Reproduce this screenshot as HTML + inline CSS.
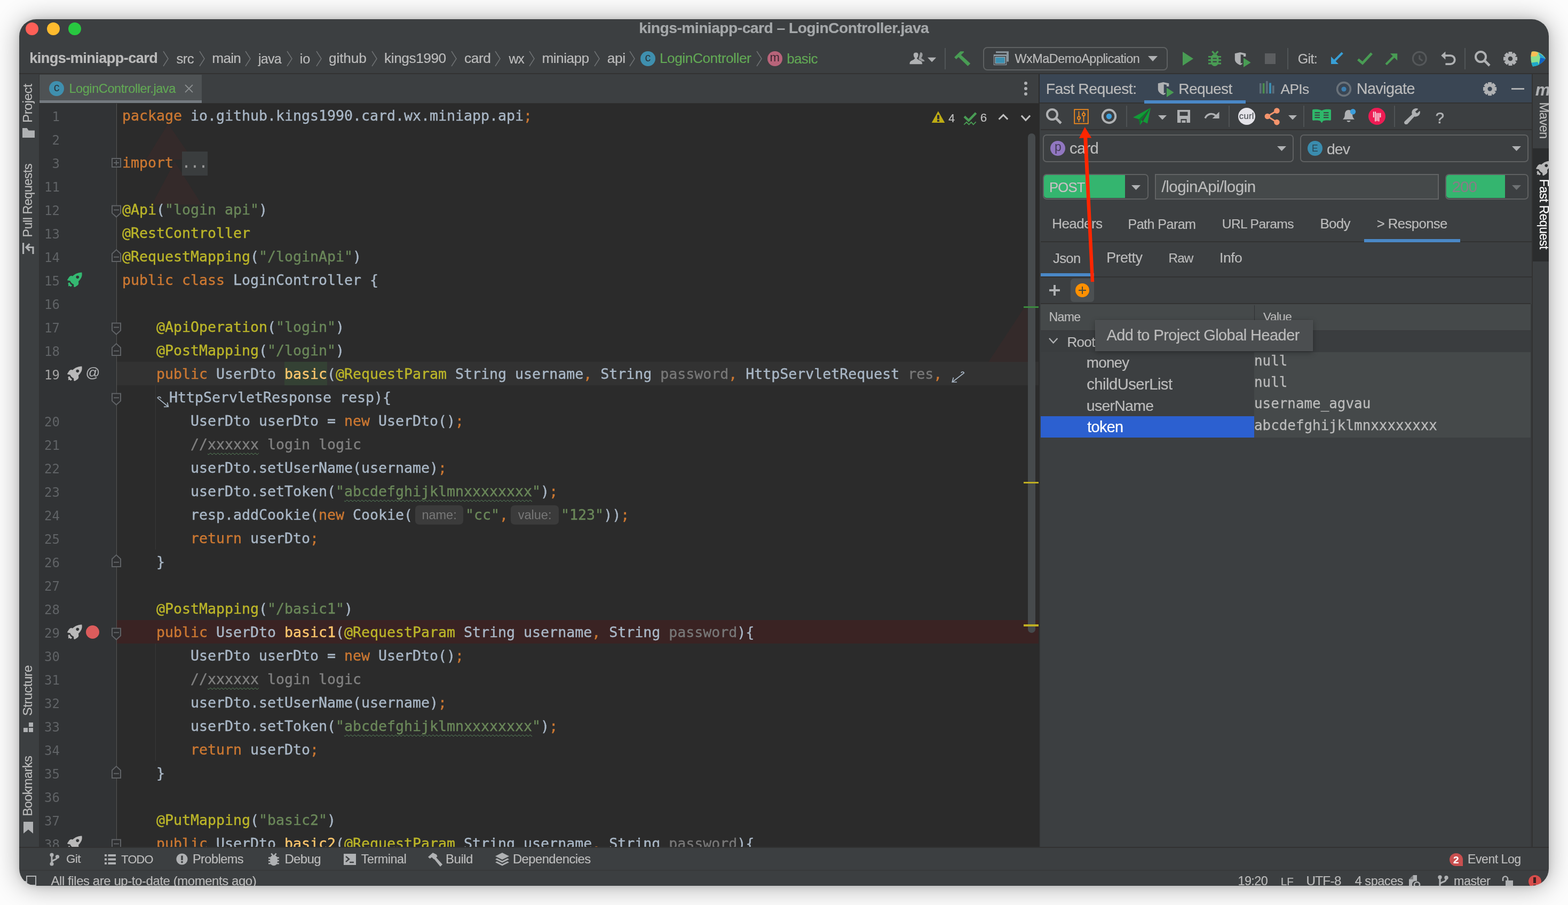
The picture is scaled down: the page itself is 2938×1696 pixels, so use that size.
<!DOCTYPE html>
<html lang="en"><head><meta charset="utf-8"><title>kings-miniapp-card – LoginController.java</title>
<style>

html,body{margin:0;padding:0;background:#fcfcfc;}
body{width:2938px;height:1696px;overflow:hidden;position:relative;font-family:"Liberation Sans",sans-serif;}
#shadow{position:absolute;left:36px;top:36px;width:2866px;height:1624px;border-radius:32px;
 box-shadow:0 2px 48px rgba(0,0,0,.33),0 0 14px rgba(0,0,0,.11);}
#win{position:absolute;left:0;top:0;width:2938px;height:1696px;background:#3c3f41;
 clip-path:inset(36px 36px 36px 36px round 32px);overflow:hidden;will-change:transform;}
#win div,#win svg,#win span{position:absolute;}
.t{white-space:pre;line-height:40px;height:40px;color:#bbbbbb;-webkit-text-stroke:0.2px;}
.c{white-space:pre;font-family:"DejaVu Sans Mono","Liberation Mono",monospace;font-size:26.58px;line-height:44px;height:44px;color:#a9b7c6;left:229px;-webkit-text-stroke:0.4px;}
.c i{font-style:normal}
.k{color:#cc7832}.a{color:#bbb529}.s{color:#6a8759}.m{color:#ffc66d}.g{color:#808080}.u{color:#787878}
.w{text-decoration:underline wavy #5b8a5e 1px;text-underline-offset:5.5px;}
.ln{white-space:pre;font-family:"DejaVu Sans Mono","Liberation Mono",monospace;font-size:24px;line-height:44px;height:44px;color:#606366;width:76px;left:36px;text-align:right;}
.v{font-family:"DejaVu Sans Mono","Liberation Mono",monospace;font-size:25.9px;color:#bbbbbb;white-space:pre;line-height:40px;height:40px;left:2350px;-webkit-text-stroke:0.3px;}
.hint{-webkit-text-stroke:0;display:inline-block;position:static !important;font-family:"Liberation Sans",sans-serif;font-size:23.5px;color:#787878;background:#3b3b3b;border-radius:7px;height:36px;line-height:36px;vertical-align:top;margin-top:4px;text-align:center;}

</style></head>
<body>
<div id="shadow"></div>
<div id="win">
<div style="left:36px;top:36px;width:2866px;height:46px;background:#3c3f41;"></div>
<div style="left:48px;top:41.8px;width:24.2px;height:24.2px;border-radius:50%;background:#fe5f57"></div>
<div style="left:87.8px;top:41.8px;width:24.2px;height:24.2px;border-radius:50%;background:#febb2e"></div>
<div style="left:128px;top:41.8px;width:24.2px;height:24.2px;border-radius:50%;background:#28c840"></div>
<span class="t" style="left:1197.3px;top:31.8px;font-size:28.25px;letter-spacing:-0.54px;color:#a5a8aa;font-weight:700;">kings-miniapp-card – LoginController.java</span>
<div style="left:36px;top:137px;width:2866px;height:2px;background:#323232;"></div>
<span class="t" style="left:55.2px;top:89.1px;font-size:27.12px;letter-spacing:-0.56px;font-weight:700;">kings-miniapp-card</span>
<span class="t" style="left:330.6px;top:89.6px;font-size:25.66px;letter-spacing:-0.64px;">src</span>
<span class="t" style="left:397.3px;top:89.4px;font-size:26.16px;letter-spacing:-0.69px;">main</span>
<span class="t" style="left:484.0px;top:89.9px;font-size:24.96px;letter-spacing:-0.68px;">java</span>
<span class="t" style="left:561.7px;top:89.7px;font-size:25.36px;">io</span>
<span class="t" style="left:616.1px;top:89.4px;font-size:26.24px;letter-spacing:-0.16px;">github</span>
<span class="t" style="left:720.1px;top:89.4px;font-size:26.24px;letter-spacing:-0.44px;">kings1990</span>
<span class="t" style="left:869.9px;top:89.4px;font-size:26.24px;letter-spacing:-0.34px;">card</span>
<span class="t" style="left:953.5px;top:89.9px;font-size:24.96px;letter-spacing:-1.31px;">wx</span>
<span class="t" style="left:1015.5px;top:89.4px;font-size:26.24px;letter-spacing:-0.54px;">miniapp</span>
<span class="t" style="left:1137.8px;top:89.4px;font-size:26.24px;letter-spacing:-0.32px;">api</span>
<svg style="left:303.6px;top:95px;" width="14" height="30" viewBox="0 0 14 30"><path d="M2 1 L11 15 L2 29" fill="none" stroke="#6e7173" stroke-width="1.6"/></svg>
<svg style="left:371.8px;top:95px;" width="14" height="30" viewBox="0 0 14 30"><path d="M2 1 L11 15 L2 29" fill="none" stroke="#6e7173" stroke-width="1.6"/></svg>
<svg style="left:458px;top:95px;" width="14" height="30" viewBox="0 0 14 30"><path d="M2 1 L11 15 L2 29" fill="none" stroke="#6e7173" stroke-width="1.6"/></svg>
<svg style="left:535.7px;top:95px;" width="14" height="30" viewBox="0 0 14 30"><path d="M2 1 L11 15 L2 29" fill="none" stroke="#6e7173" stroke-width="1.6"/></svg>
<svg style="left:590.5px;top:95px;" width="14" height="30" viewBox="0 0 14 30"><path d="M2 1 L11 15 L2 29" fill="none" stroke="#6e7173" stroke-width="1.6"/></svg>
<svg style="left:694.5px;top:95px;" width="14" height="30" viewBox="0 0 14 30"><path d="M2 1 L11 15 L2 29" fill="none" stroke="#6e7173" stroke-width="1.6"/></svg>
<svg style="left:843.7px;top:95px;" width="14" height="30" viewBox="0 0 14 30"><path d="M2 1 L11 15 L2 29" fill="none" stroke="#6e7173" stroke-width="1.6"/></svg>
<svg style="left:926px;top:95px;" width="14" height="30" viewBox="0 0 14 30"><path d="M2 1 L11 15 L2 29" fill="none" stroke="#6e7173" stroke-width="1.6"/></svg>
<svg style="left:990px;top:95px;" width="14" height="30" viewBox="0 0 14 30"><path d="M2 1 L11 15 L2 29" fill="none" stroke="#6e7173" stroke-width="1.6"/></svg>
<svg style="left:1111.6px;top:95px;" width="14" height="30" viewBox="0 0 14 30"><path d="M2 1 L11 15 L2 29" fill="none" stroke="#6e7173" stroke-width="1.6"/></svg>
<svg style="left:1177.6px;top:95px;" width="14" height="30" viewBox="0 0 14 30"><path d="M2 1 L11 15 L2 29" fill="none" stroke="#6e7173" stroke-width="1.6"/></svg>
<svg style="left:1416px;top:95px;" width="14" height="30" viewBox="0 0 14 30"><path d="M2 1 L11 15 L2 29" fill="none" stroke="#6e7173" stroke-width="1.6"/></svg>
<span class="t" style="left:1235.9px;top:89.4px;font-size:26.24px;letter-spacing:-0.43px;color:#62a855;">LoginController</span>
<span class="t" style="left:1474.2px;top:89.5px;font-size:25.88px;letter-spacing:-0.56px;color:#62a855;">basic</span>
<div style="left:1199.8px;top:96.3px;width:28px;height:28px;border-radius:50%;background:#3f8fae;"></div>
<span style="left:1199.8px;top:94px;width:28px;height:28px;line-height:28px;text-align:center;font-size:21.5px;color:#2b3238;font-weight:400">c</span>
<div style="left:1437.6px;top:96.3px;width:28px;height:28px;border-radius:50%;background:#b8647a;"></div>
<span style="left:1437.6px;top:94.3px;width:28px;height:28px;line-height:28px;text-align:center;font-size:22px;color:#3a2630;font-weight:400">m</span>
<svg style="left:1700px;top:94px" width="58" height="32" viewBox="1700 94 58 32"><g fill="#afb1b3"><path d="M1724.6 98 C1727.6 98 1728.8 100.4 1728.6 103 C1728.4 105.6 1727.3 107.3 1726.2 108.3 C1726.5 110.8 1732.2 111.2 1732.4 115 H1727 C1725.3 113.2 1721.5 112.6 1721.2 110.3 Z" opacity=".8"/><path d="M1716.2 98 C1720 98 1721.3 100.8 1721 103.6 C1720.7 106.4 1719.6 108 1718.5 109 C1718.7 112.3 1728 112.3 1728.4 118.5 V120.8 H1704 V118.5 C1704.4 112.3 1713.7 112.3 1713.9 109 C1712.8 108 1711.7 106.4 1711.4 103.6 C1711.1 100.8 1712.4 98 1716.2 98 Z" stroke="#3c3f41" stroke-width="1"/><path d="M1738 107.8 H1754.2 L1746.1 116.2 Z"/></g></svg>
<div style="left:1770px;top:90px;width:2px;height:40px;background:#515658;"></div>
<svg style="left:1786px;top:94px" width="36" height="32" viewBox="1786 94 36 32"><path d="M1788.1 107.2 L1799.4 96.3 L1806 96.3 L1806 98.1 L1800.7 102.9 L1818.2 119 L1813.4 123.8 L1796 107 L1791.6 111 Z" fill="#499c54"/></svg>
<div style="left:1842px;top:88px;width:346px;height:44px;box-sizing:border-box;border:2px solid #5e6162;border-radius:8px;"></div>
<svg style="left:1860px;top:95px" width="32" height="29" viewBox="1860 95 32 29"><path d="M1866 102.3 V96.2 H1890 V115.5 H1886.2 V99.2 H1866 Z" fill="#9aa7b0" opacity=".85"/><rect x="1861.8" y="102.3" width="24.4" height="19.7" fill="#9aa7b0"/><rect x="1865.7" y="107.8" width="16.6" height="10.3" fill="#3a8fb0"/><rect x="1863.6" y="105.6" width="20.8" height="14.6" fill="none" stroke="#3c3f41" stroke-width="1.6"/></svg>
<span class="t" style="left:1901.5px;top:90.4px;font-size:23.44px;letter-spacing:-0.52px;">WxMaDemoApplication</span>
<svg style="left:2151px;top:104px;" width="18" height="12" viewBox="0 0 18 12"><path d="M0 1 H18 L9 11 Z" fill="#afb1b3"/></svg>
<svg style="left:2215px;top:97px;" width="22" height="26" viewBox="0 0 22 26"><path d="M1 0 L21 13 L1 26 Z" fill="#499c54"/></svg>
<svg style="left:2262px;top:94px" width="28" height="32" viewBox="2262 94 28 32"><g fill="none" stroke="#499c54" stroke-width="3.2"><path d="M2271.3 96.2 L2276 101.3 M2282.2 96.2 L2277.5 101.3"/><path d="M2264 106.4 H2288 M2264 112.7 H2288 M2264 119 H2288" stroke-width="2.9"/></g><path d="M2268.9 109 A7.2 7.6 0 0 1 2283.3 109 V116.5 A7.2 7.4 0 0 1 2268.9 116.5 Z" fill="#499c54"/><path d="M2272.4 109.5 H2279.8 M2272.4 115.6 H2279.8" stroke="#3c3f41" stroke-width="2.2"/></svg>
<svg style="left:2312px;top:96px" width="34" height="32" viewBox="2312 96 34 32"><path d="M2313.8 100.3 L2323.8 98 L2334.3 100.3 V105.9 H2329.9 V102.9 L2324.7 102 V119 L2327.7 117.7 V120 L2323.8 122 C2318 119.5 2313.8 116 2313.8 111 Z" fill="#afb1b3"/><path d="M2330 108.5 L2343.6 117.2 L2330 126 Z" fill="#499c54"/></svg>
<div style="left:2370px;top:100px;width:20px;height:20px;background:#5c5e60;"></div>
<div style="left:2412px;top:90px;width:2px;height:40px;background:#515658;"></div>
<span class="t" style="left:2431.7px;top:89.9px;font-size:24.96px;letter-spacing:-0.60px;">Git:</span>
<svg style="left:2490px;top:94px" width="30" height="30" viewBox="2490 94 30 30"><path d="M2515.3 99.1 L2499 115.4" stroke="#389fd6" stroke-width="4.2" fill="none"/><path d="M2494 106 V120 H2508 Z" fill="#389fd6"/></svg>
<svg style="left:2540px;top:94px" width="34" height="30" viewBox="2540 94 34 30"><path d="M2544.6 111.2 L2553 118.4 L2570.2 99.8" fill="none" stroke="#499c54" stroke-width="4.8"/></svg>
<svg style="left:2592px;top:94px" width="30" height="30" viewBox="2592 94 30 30"><path d="M2597 120.8 L2613 104.8" stroke="#499c54" stroke-width="4.2" fill="none"/><path d="M2604.8 100.2 H2618.2 V113.6 Z" fill="#499c54"/></svg>
<svg style="left:2644px;top:94px" width="32" height="32" viewBox="2644 94 32 32"><circle cx="2659.8" cy="109.7" r="12.4" fill="none" stroke="#55585a" stroke-width="3.2"/><path d="M2659.8 103.5 V110 L2665.5 114" fill="none" stroke="#55585a" stroke-width="3"/></svg>
<svg style="left:2698px;top:94px" width="32" height="32" viewBox="2698 94 32 32"><path d="M2700.2 104.1 L2708.4 96.4 V111.8 Z" fill="#afb1b3"/><path d="M2707 104.1 H2717.8 A8 8 0 0 1 2717.8 120.1 H2708.4" fill="none" stroke="#afb1b3" stroke-width="3.8"/></svg>
<div style="left:2744px;top:90px;width:2px;height:40px;background:#515658;"></div>
<svg style="left:2761.5px;top:93.6px;" width="32" height="32" viewBox="0 0 32 32"><circle cx="12.5" cy="12.5" r="9.5" fill="none" stroke="#afb1b3" stroke-width="4"/><path d="M19.5 19.5 L29 29" stroke="#afb1b3" stroke-width="4.6"/></svg>
<svg style="left:2815.7px;top:96.2px;" width="28" height="28" viewBox="0 0 28 28"><g transform="translate(14,14)" fill="#afb1b3"><rect x="-3.6" y="-13" width="7.2" height="26" rx="1" transform="rotate(0)"/><rect x="-3.6" y="-13" width="7.2" height="26" rx="1" transform="rotate(45)"/><rect x="-3.6" y="-13" width="7.2" height="26" rx="1" transform="rotate(90)"/><rect x="-3.6" y="-13" width="7.2" height="26" rx="1" transform="rotate(135)"/><circle r="9.36"/><circle r="4.29" fill="#3c3f41"/></g></svg>
<svg style="left:2866px;top:94px" width="34" height="34" viewBox="2866 94 34 34"><path d="M2870 97 C2880 94 2892 102 2896 110 C2890 119 2880 124 2872 124.5 C2867.5 116 2867.5 104 2870 97 Z" fill="#8be08f"/><path d="M2870 97 C2874 96 2879 97 2882.5 99 L2879 105.5 L2868.6 106 C2868.7 103 2869.2 99.5 2870 97 Z" fill="#f9bd55"/><path d="M2882.5 99 C2888 101.5 2893 106 2896 110 L2886 108 Z" fill="#2ba3d6"/><path d="M2896 110 C2893 115 2888 119 2883.5 121.5 L2886 108 Z" fill="#0f63c6"/><path d="M2872 124.5 C2876 124.2 2880 123.2 2883.5 121.5 L2881 116 L2869.5 117.5 C2870 120 2871 122.5 2872 124.5 Z" fill="#1fa8c9"/></svg>
<div style="left:36px;top:139px;width:37px;height:1449px;background:#3c3f41;"></div>
<div style="left:73px;top:139px;width:1px;height:1449px;background:#323232;"></div>
<div style="left:74px;top:139px;width:1872px;height:54px;background:#3c3f41;"></div>
<div style="left:74px;top:140px;width:304px;height:53px;background:#4e5254;"></div>
<div style="left:74px;top:188px;width:304px;height:5px;background:#747a80;"></div>
<div style="left:74px;top:193px;width:1872px;height:1px;background:#323232;"></div>
<div style="left:92px;top:152px;width:28px;height:28px;border-radius:50%;background:#3f8fae;"></div>
<span style="left:92px;top:149.7px;width:28px;height:28px;line-height:28px;text-align:center;font-size:21.5px;color:#2b3238;font-weight:400">c</span>
<span class="t" style="left:129.4px;top:146.4px;font-size:23.52px;letter-spacing:-0.42px;color:#62a855;">LoginController.java</span>
<svg style="left:346px;top:158px;" width="16" height="16" viewBox="0 0 16 16"><path d="M1 1 L15 15 M15 1 L1 15" stroke="#8a8d8f" stroke-width="1.8" fill="none"/></svg>
<div style="left:1919px;top:153px;width:6px;height:6px;border-radius:50%;background:#afb1b3"></div>
<div style="left:1919px;top:163px;width:6px;height:6px;border-radius:50%;background:#afb1b3"></div>
<div style="left:1919px;top:173px;width:6px;height:6px;border-radius:50%;background:#afb1b3"></div>
<div style="left:74px;top:194px;width:144px;height:1394px;background:#313335;"></div>
<div style="left:218px;top:194px;width:1728px;height:1394px;background:#2b2b2b;"></div>
<div style="left:217.5px;top:194px;width:1.5px;height:1394px;background:#555555;"></div>
<div style="left:219px;top:678.4px;width:1727px;height:44px;background:#323232;"></div>
<div style="left:219px;top:1162.4px;width:1727px;height:44px;background:#3a2323;"></div>
<svg style="left:260px;top:225px" width="130" height="165" viewBox="260 225 130 165"><path d="M315 232 L361 299 L273.5 299 Z M327.5 303 L378 383.5 L284.5 383.5 Z" fill="#4a2626" opacity=".28"/></svg>
<svg style="left:1850px;top:575px" width="80" height="106" viewBox="1850 575 80 106"><path d="M1918.7 577.3 L1925.5 577.3 L1925.5 678.4 L1852 678.4 Z" fill="#4a2626" opacity=".28"/></svg>
<div style="left:533px;top:678.4px;width:80px;height:44px;background:#344134;"></div>
<div style="left:290.5px;top:722.4px;width:1.5px;height:308px;background:#393939;"></div>
<div style="left:290.5px;top:1206.4px;width:1.5px;height:220px;background:#393939;"></div>
<span class="ln" style="top:196.6px">1</span>
<span class="c" style="top:195.4px"><i class="k">package</i> io.github.kings1990.card.wx.miniapp.api<i class="k">;</i></span>
<span class="ln" style="top:240.6px">2</span>
<span class="ln" style="top:284.6px">3</span>
<span class="c" style="top:283.4px"><i class="k">import</i> <i style="background:#3a3d3e;color:#9a9a9a;padding:5px 0 9px 0">...</i></span>
<span class="ln" style="top:328.6px">11</span>
<span class="ln" style="top:372.6px">12</span>
<span class="c" style="top:371.4px"><i class="a">@Api</i>(<i class="s">&quot;login api&quot;</i>)</span>
<span class="ln" style="top:416.6px">13</span>
<span class="c" style="top:415.4px"><i class="a">@RestController</i></span>
<span class="ln" style="top:460.6px">14</span>
<span class="c" style="top:459.4px"><i class="a">@RequestMapping</i>(<i class="s">&quot;/loginApi&quot;</i>)</span>
<span class="ln" style="top:504.6px">15</span>
<span class="c" style="top:503.4px"><i class="k">public class</i> LoginController {</span>
<span class="ln" style="top:548.6px">16</span>
<span class="ln" style="top:592.6px">17</span>
<span class="c" style="top:591.4px">    <i class="a">@ApiOperation</i>(<i class="s">&quot;login&quot;</i>)</span>
<span class="ln" style="top:636.6px">18</span>
<span class="c" style="top:635.4px">    <i class="a">@PostMapping</i>(<i class="s">&quot;/login&quot;</i>)</span>
<span class="ln" style="top:680.6px;color:#a4a3a3">19</span>
<span class="c" style="top:679.4px">    <i class="k">public</i> UserDto <i class="m">basic</i>(<i class="a">@RequestParam</i> String username<i class="k">,</i> String <i class="u">password</i><i class="k">,</i> HttpServletRequest <i class="u">res</i><i class="k">,</i></span>
<span class="c" style="top:723.4px">    <i style="display:inline-block;width:24px;position:static"></i>HttpServletResponse resp){</span>
<span class="ln" style="top:768.6px">20</span>
<span class="c" style="top:767.4px">        UserDto userDto = <i class="k">new</i> UserDto()<i class="k">;</i></span>
<span class="ln" style="top:812.6px">21</span>
<span class="c" style="top:811.4px">        <i class="g">//<i class="w">xxxxxx</i> login logic</i></span>
<span class="ln" style="top:856.6px">22</span>
<span class="c" style="top:855.4px">        userDto.setUserName(username)<i class="k">;</i></span>
<span class="ln" style="top:900.6px">23</span>
<span class="c" style="top:899.4px">        userDto.setToken(<i class="s">&quot;<i class="w">abcdefghijklmnxxxxxxxx</i>&quot;</i>)<i class="k">;</i></span>
<span class="ln" style="top:944.6px">24</span>
<span class="c" style="top:943.4px">        resp.addCookie(<i class="k">new</i> Cookie(<i class="hint" style="width:90px;margin-left:5px;margin-right:4px">name:</i><i class="s">&quot;cc&quot;</i><i class="k">,</i><i class="hint" style="width:90px;margin-left:5px;margin-right:4px">value:</i><i class="s">&quot;123&quot;</i>))<i class="k">;</i></span>
<span class="ln" style="top:988.6px">25</span>
<span class="c" style="top:987.4px">        <i class="k">return</i> userDto<i class="k">;</i></span>
<span class="ln" style="top:1032.6px">26</span>
<span class="c" style="top:1031.4px">    }</span>
<span class="ln" style="top:1076.6px">27</span>
<span class="ln" style="top:1120.6px">28</span>
<span class="c" style="top:1119.4px">    <i class="a">@PostMapping</i>(<i class="s">&quot;/basic1&quot;</i>)</span>
<span class="ln" style="top:1164.6px">29</span>
<span class="c" style="top:1163.4px">    <i class="k">public</i> UserDto <i class="m">basic1</i>(<i class="a">@RequestParam</i> String username<i class="k">,</i> String <i class="u">password</i>){</span>
<span class="ln" style="top:1208.6px">30</span>
<span class="c" style="top:1207.4px">        UserDto userDto = <i class="k">new</i> UserDto()<i class="k">;</i></span>
<span class="ln" style="top:1252.6px">31</span>
<span class="c" style="top:1251.4px">        <i class="g">//<i class="w">xxxxxx</i> login logic</i></span>
<span class="ln" style="top:1296.6px">32</span>
<span class="c" style="top:1295.4px">        userDto.setUserName(username)<i class="k">;</i></span>
<span class="ln" style="top:1340.6px">33</span>
<span class="c" style="top:1339.4px">        userDto.setToken(<i class="s">&quot;<i class="w">abcdefghijklmnxxxxxxxx</i>&quot;</i>)<i class="k">;</i></span>
<span class="ln" style="top:1384.6px">34</span>
<span class="c" style="top:1383.4px">        <i class="k">return</i> userDto<i class="k">;</i></span>
<span class="ln" style="top:1428.6px">35</span>
<span class="c" style="top:1427.4px">    }</span>
<span class="ln" style="top:1472.6px">36</span>
<span class="ln" style="top:1516.6px">37</span>
<span class="c" style="top:1515.4px">    <i class="a">@PutMapping</i>(<i class="s">&quot;basic2&quot;</i>)</span>
<span class="ln" style="top:1560.6px">38</span>
<span class="c" style="top:1559.4px">    <i class="k">public</i> UserDto <i class="m">basic2</i>(<i class="a">@RequestParam</i> String username<i class="k">,</i> String <i class="u">password</i>){</span>
<svg style="left:208px;top:295.4px;" width="20" height="20" viewBox="0 0 20 20"><rect x="2" y="2" width="16" height="16" fill="#2e2f31" stroke="#606366" stroke-width="2"/><path d="M5 10 H15 M10 5 V15" stroke="#606366" stroke-width="2"/></svg>
<svg style="left:208px;top:384.4px;" width="20" height="26" viewBox="0 0 20 26"><path d="M2 1.6 H18 V15.4 L10 22.6 L2 15.4 Z" fill="#2e2f31" stroke="#606366" stroke-width="2"/><path d="M5 9.4 H15" stroke="#606366" stroke-width="2"/></svg>
<svg style="left:208px;top:604.4px;" width="20" height="26" viewBox="0 0 20 26"><path d="M2 1.6 H18 V15.4 L10 22.6 L2 15.4 Z" fill="#2e2f31" stroke="#606366" stroke-width="2"/><path d="M5 9.4 H15" stroke="#606366" stroke-width="2"/></svg>
<svg style="left:208px;top:736.4px;" width="20" height="26" viewBox="0 0 20 26"><path d="M2 1.6 H18 V15.4 L10 22.6 L2 15.4 Z" fill="#2e2f31" stroke="#606366" stroke-width="2"/><path d="M5 9.4 H15" stroke="#606366" stroke-width="2"/></svg>
<svg style="left:208px;top:1176.4px;" width="20" height="26" viewBox="0 0 20 26"><path d="M2 1.6 H18 V15.4 L10 22.6 L2 15.4 Z" fill="#2e2f31" stroke="#606366" stroke-width="2"/><path d="M5 9.4 H15" stroke="#606366" stroke-width="2"/></svg>
<svg style="left:208px;top:1572.4px;" width="20" height="26" viewBox="0 0 20 26"><path d="M2 1.6 H18 V15.4 L10 22.6 L2 15.4 Z" fill="#2e2f31" stroke="#606366" stroke-width="2"/><path d="M5 9.4 H15" stroke="#606366" stroke-width="2"/></svg>
<svg style="left:208px;top:466.4px;" width="20" height="26" viewBox="0 0 20 26"><path d="M2 24 H18 V9.5 L10 2 L2 9.5 Z" fill="#2e2f31" stroke="#606366" stroke-width="2"/><path d="M5 15.7 H15" stroke="#606366" stroke-width="2"/></svg>
<svg style="left:208px;top:642.4px;" width="20" height="26" viewBox="0 0 20 26"><path d="M2 24 H18 V9.5 L10 2 L2 9.5 Z" fill="#2e2f31" stroke="#606366" stroke-width="2"/><path d="M5 15.7 H15" stroke="#606366" stroke-width="2"/></svg>
<svg style="left:208px;top:1038.4px;" width="20" height="26" viewBox="0 0 20 26"><path d="M2 24 H18 V9.5 L10 2 L2 9.5 Z" fill="#2e2f31" stroke="#606366" stroke-width="2"/><path d="M5 15.7 H15" stroke="#606366" stroke-width="2"/></svg>
<svg style="left:208px;top:1434.4px;" width="20" height="26" viewBox="0 0 20 26"><path d="M2 24 H18 V9.5 L10 2 L2 9.5 Z" fill="#2e2f31" stroke="#606366" stroke-width="2"/><path d="M5 15.7 H15" stroke="#606366" stroke-width="2"/></svg>
<svg style="left:125.6px;top:509.5px;" width="28" height="28.4" viewBox="0 0 28 28.4"><path fill-rule="evenodd" d="M27.3 .5 C25 .3 19 1.5 15.7 3.3 C13 5 11.5 6.3 10 7.6 C8.8 7 7.6 6.7 6.7 6.9 C5.5 7.2 4.5 8 3.8 8.8 L.2 14.3 C0 15 .2 15.4 .7 15.5 L5.7 16.6 C6 17.5 6.3 18.2 6.7 18.8 C7.5 20 8.5 21 9.5 21.6 C10.3 22.2 11.2 22.7 12.1 23 L12.4 27.6 C13 28 14 28.1 14.7 27.8 L19 25 C20.2 24 21 23 21.2 22.1 C21.5 20.5 21.3 19 20.9 17.4 C22.5 16 23.7 14.6 24.7 13.1 C26 11 26.8 9.5 27.1 8.3 C27.7 6 27.8 4 27.6 3.1 C27.6 1.5 27.5 1 27.3 .5 Z M19.3 6.4 a2.9 2.9 0 1 0 .01 0 Z" fill="#34b871"/><path d="M3.6 18.8 L1.2 21.4 L2.4 23.5 L1.7 26.4 L4.3 25.7 L6.7 27.6 L9.3 24.7 C8.2 24.3 7.4 23.8 6.7 23.1 C6 22.4 5.5 21.6 5.2 20.7 Z" fill="#34b871"/></svg>
<svg style="left:125.6px;top:685.5px;" width="28" height="28.4" viewBox="0 0 28 28.4"><path fill-rule="evenodd" d="M27.3 .5 C25 .3 19 1.5 15.7 3.3 C13 5 11.5 6.3 10 7.6 C8.8 7 7.6 6.7 6.7 6.9 C5.5 7.2 4.5 8 3.8 8.8 L.2 14.3 C0 15 .2 15.4 .7 15.5 L5.7 16.6 C6 17.5 6.3 18.2 6.7 18.8 C7.5 20 8.5 21 9.5 21.6 C10.3 22.2 11.2 22.7 12.1 23 L12.4 27.6 C13 28 14 28.1 14.7 27.8 L19 25 C20.2 24 21 23 21.2 22.1 C21.5 20.5 21.3 19 20.9 17.4 C22.5 16 23.7 14.6 24.7 13.1 C26 11 26.8 9.5 27.1 8.3 C27.7 6 27.8 4 27.6 3.1 C27.6 1.5 27.5 1 27.3 .5 Z M19.3 6.4 a2.9 2.9 0 1 0 .01 0 Z" fill="#b9b9b9"/><path d="M3.6 18.8 L1.2 21.4 L2.4 23.5 L1.7 26.4 L4.3 25.7 L6.7 27.6 L9.3 24.7 C8.2 24.3 7.4 23.8 6.7 23.1 C6 22.4 5.5 21.6 5.2 20.7 Z" fill="#b9b9b9"/></svg>
<svg style="left:125.6px;top:1169.5px;" width="28" height="28.4" viewBox="0 0 28 28.4"><path fill-rule="evenodd" d="M27.3 .5 C25 .3 19 1.5 15.7 3.3 C13 5 11.5 6.3 10 7.6 C8.8 7 7.6 6.7 6.7 6.9 C5.5 7.2 4.5 8 3.8 8.8 L.2 14.3 C0 15 .2 15.4 .7 15.5 L5.7 16.6 C6 17.5 6.3 18.2 6.7 18.8 C7.5 20 8.5 21 9.5 21.6 C10.3 22.2 11.2 22.7 12.1 23 L12.4 27.6 C13 28 14 28.1 14.7 27.8 L19 25 C20.2 24 21 23 21.2 22.1 C21.5 20.5 21.3 19 20.9 17.4 C22.5 16 23.7 14.6 24.7 13.1 C26 11 26.8 9.5 27.1 8.3 C27.7 6 27.8 4 27.6 3.1 C27.6 1.5 27.5 1 27.3 .5 Z M19.3 6.4 a2.9 2.9 0 1 0 .01 0 Z" fill="#b9b9b9"/><path d="M3.6 18.8 L1.2 21.4 L2.4 23.5 L1.7 26.4 L4.3 25.7 L6.7 27.6 L9.3 24.7 C8.2 24.3 7.4 23.8 6.7 23.1 C6 22.4 5.5 21.6 5.2 20.7 Z" fill="#b9b9b9"/></svg>
<svg style="left:125.6px;top:1565.5px;" width="28" height="28.4" viewBox="0 0 28 28.4"><path fill-rule="evenodd" d="M27.3 .5 C25 .3 19 1.5 15.7 3.3 C13 5 11.5 6.3 10 7.6 C8.8 7 7.6 6.7 6.7 6.9 C5.5 7.2 4.5 8 3.8 8.8 L.2 14.3 C0 15 .2 15.4 .7 15.5 L5.7 16.6 C6 17.5 6.3 18.2 6.7 18.8 C7.5 20 8.5 21 9.5 21.6 C10.3 22.2 11.2 22.7 12.1 23 L12.4 27.6 C13 28 14 28.1 14.7 27.8 L19 25 C20.2 24 21 23 21.2 22.1 C21.5 20.5 21.3 19 20.9 17.4 C22.5 16 23.7 14.6 24.7 13.1 C26 11 26.8 9.5 27.1 8.3 C27.7 6 27.8 4 27.6 3.1 C27.6 1.5 27.5 1 27.3 .5 Z M19.3 6.4 a2.9 2.9 0 1 0 .01 0 Z" fill="#b9b9b9"/><path d="M3.6 18.8 L1.2 21.4 L2.4 23.5 L1.7 26.4 L4.3 25.7 L6.7 27.6 L9.3 24.7 C8.2 24.3 7.4 23.8 6.7 23.1 C6 22.4 5.5 21.6 5.2 20.7 Z" fill="#b9b9b9"/></svg>
<span class="t" style="left:160.4px;top:677.7px;font-size:26.51px;color:#afb1b3;">@</span>
<div style="left:161px;top:1171.9px;width:25px;height:25px;border-radius:50%;background:#db5c5c"></div>
<svg style="left:294px;top:741.9px;" width="24" height="22" viewBox="0 0 24 22"><g fill="none" stroke="#a9b7c6" stroke-width="1.7"><path d="M7.5 4.5 C6.5 1 2.5 1 1.2 3.6 L20.5 19.5"/><path d="M13 20.4 L21.3 20.2 L19.5 12.2"/></g></svg>
<svg style="left:1782px;top:694.9px;" width="26" height="24" viewBox="0 0 26 24"><g fill="none" stroke="#a9b7c6" stroke-width="1.7"><path d="M19 4 C19.5 1 23.5 1 24.3 4 L3 20.5"/><path d="M4.5 12.5 L2.2 21 L11 21"/></g></svg>
<svg style="left:1744px;top:206px" width="28" height="26" viewBox="1744 206 28 26"><path d="M1757.9 208.3 L1770.3 230 H1745.7 Z" fill="#beac14"/><rect x="1756" y="215.5" width="4.1" height="7.8" fill="#2c2c36"/><rect x="1756" y="224.7" width="4.1" height="3.3" fill="#2c2c36"/></svg>
<span class="t" style="left:1777.2px;top:201.5px;font-size:21.18px;color:#c0c0c0;">4</span>
<svg style="left:1803px;top:206px" width="30" height="30" viewBox="1803 206 30 30"><path d="M1807 218.3 L1815 226 L1828.7 211.8" fill="none" stroke="#499c54" stroke-width="4.4"/><path d="M1806.2 233.6 L1811.1 228.8 L1815.5 233.4 L1819.8 228.8 L1823.8 233.4 L1828.6 228.4" fill="none" stroke="#499c54" stroke-width="1.8"/></svg>
<span class="t" style="left:1836.7px;top:201.1px;font-size:22.34px;color:#c0c0c0;">6</span>
<svg style="left:1868px;top:212px" width="24" height="16" viewBox="1868 212 24 16"><path d="M1871.6 223.6 L1880 215.4 L1888.2 223.6" fill="none" stroke="#c0c0c0" stroke-width="3"/></svg>
<svg style="left:1910px;top:213px" width="24" height="16" viewBox="1910 213 24 16"><path d="M1913.8 216.6 L1921.9 225.2 L1930.1 216.6" fill="none" stroke="#c0c0c0" stroke-width="3"/></svg>
<div style="left:1926px;top:250px;width:14px;height:936px;background:#464a4c;border-radius:7px;"></div>
<div style="left:1918px;top:574px;width:28px;height:3px;background:#3b8a3e;"></div>
<div style="left:1918px;top:902.5px;width:28px;height:3.5px;background:#bfae22;"></div>
<div style="left:1918px;top:1170px;width:28px;height:3.5px;background:#bfae22;"></div>
<div style="left:1946px;top:139px;width:2px;height:1449px;background:#2b2b2b;"></div>
<div style="left:1948px;top:139px;width:922px;height:1449px;background:#3c3f41;"></div>
<div style="left:1948px;top:454px;width:2px;height:1134px;background:#393c3e;"></div>
<div style="left:1948px;top:139px;width:922px;height:55px;background:#3a4654;"></div>
<div style="left:1948px;top:192px;width:922px;height:2px;background:#323232;"></div>
<div style="left:2144px;top:188px;width:190px;height:6px;background:#4a88c7;"></div>
<span class="t" style="left:1959.7px;top:146.2px;font-size:28.45px;letter-spacing:-0.55px;">Fast Request:</span>
<svg style="left:2167.8px;top:152px" width="34" height="32" viewBox="2312 96 34 32"><path d="M2313.8 100.3 L2323.8 98 L2334.3 100.3 V105.9 H2329.9 V102.9 L2324.7 102 V119 L2327.7 117.7 V120 L2323.8 122 C2318 119.5 2313.8 116 2313.8 111 Z" fill="#afb1b3"/><path d="M2330 108.5 L2343.6 117.2 L2330 126 Z" fill="#499c54"/></svg>
<span class="t" style="left:2208.2px;top:146.3px;font-size:28.2px;letter-spacing:-0.66px;">Request</span>
<svg style="left:2358px;top:150px" width="32" height="28" viewBox="2358 150 32 28"><rect x="2359.9" y="156" width="3.7" height="19.3" fill="#5d6d79"/><rect x="2365.8" y="156" width="3.7" height="19.3" fill="#4d8f4f"/><rect x="2372" y="151.8" width="3.7" height="23.5" fill="#5d6d79"/><rect x="2378.1" y="155.4" width="3.8" height="19.9" fill="#3b8fb5"/><rect x="2383.9" y="160.3" width="3.7" height="15" fill="#5d6d79"/></svg>
<span class="t" style="left:2399.5px;top:147.0px;font-size:26.37px;letter-spacing:-0.70px;">APIs</span>
<svg style="left:2503px;top:152px;" width="30" height="30" viewBox="0 0 30 30"><circle cx="15" cy="15" r="12.4" fill="none" stroke="#6a727a" stroke-width="3.6"/><circle cx="15" cy="15" r="4.6" fill="#3d7fb0"/></svg>
<span class="t" style="left:2541.7px;top:146.1px;font-size:28.91px;letter-spacing:-0.61px;">Navigate</span>
<svg style="left:2778px;top:152.5px;" width="27.2" height="27.2" viewBox="0 0 27.2 27.2"><g transform="translate(13.6,13.6)" fill="#afb1b3"><rect x="-3.6" y="-12.6" width="7.2" height="25.2" rx="1" transform="rotate(0)"/><rect x="-3.6" y="-12.6" width="7.2" height="25.2" rx="1" transform="rotate(45)"/><rect x="-3.6" y="-12.6" width="7.2" height="25.2" rx="1" transform="rotate(90)"/><rect x="-3.6" y="-12.6" width="7.2" height="25.2" rx="1" transform="rotate(135)"/><circle r="9.072"/><circle r="4.158" fill="#3a4654"/></g></svg>
<div style="left:2832px;top:164.5px;width:24px;height:3px;background:#afb1b3;"></div>
<div style="left:1950px;top:242px;width:920px;height:2px;background:#323232;"></div>
<svg style="left:1958.5px;top:202.2px;" width="32" height="32" viewBox="0 0 32 32"><circle cx="12.5" cy="12.5" r="9.5" fill="none" stroke="#afb1b3" stroke-width="4"/><path d="M19.5 19.5 L29 29" stroke="#afb1b3" stroke-width="4.6"/></svg>
<svg style="left:2012px;top:203.5px;" width="28" height="29" viewBox="0 0 28 29"><g fill="none" stroke="#f28b1e" stroke-width="1.8"><rect x="1.2" y="1.2" width="25.6" height="26.4"/><path d="M9.5 4.5 V14 M9.5 20 V24.5 M18.5 4.5 V7.5 M18.5 13.5 V24.5"/><circle cx="9.5" cy="17" r="2.6"/><circle cx="18.5" cy="10.5" r="2.6"/></g></svg>
<svg style="left:2063px;top:203px;" width="30" height="30" viewBox="0 0 30 30"><circle cx="15" cy="15" r="12.2" fill="none" stroke="#afb1b3" stroke-width="4"/><circle cx="15" cy="15" r="5.2" fill="#3c9edb"/></svg>
<div style="left:2110px;top:198px;width:2px;height:40px;background:#4f5355;"></div>
<div style="left:2301.7px;top:198px;width:2px;height:40px;background:#4f5355;"></div>
<div style="left:2442px;top:198px;width:2px;height:40px;background:#4f5355;"></div>
<div style="left:2612px;top:198px;width:2px;height:40px;background:#4f5355;"></div>
<svg style="left:2123px;top:202px;" width="34" height="33" viewBox="0 0 34 33"><path d="M33 0 L0 18 L11 21.5 L13 32.5 L18.5 25.5 L27 29.5 Z" fill="#129a37"/><path d="M33 0 L11 21.5 L13 32.5 L15.5 23 Z" fill="#0b7a2a"/><path d="M33 0 L15.5 23 L18.5 25.5 Z" fill="#3c3f41"/></svg>
<svg style="left:2170px;top:215.75px;" width="16" height="8.5" viewBox="0 0 16 8.5"><path d="M0 0 H16 L8.0 8.5 Z" fill="#afb1b3"/></svg>
<svg style="left:2206px;top:206px;" width="24" height="24" viewBox="0 0 24 24"><path d="M0 0 H24 V24 H0 Z M4.5 3.5 V11 H19.5 V3.5 Z M6.5 24 V17 H17.5 V24 Z" fill="#afb1b3" fill-rule="evenodd"/><rect x="8.5" y="19.5" width="7" height="4.5" fill="#afb1b3"/></svg>
<svg style="left:2256px;top:208px;" width="30" height="16" viewBox="0 0 30 16"><path d="M2 13.5 C6 5 15 3 22 8.5" fill="none" stroke="#afb1b3" stroke-width="3.4"/><path d="M28.5 1.5 V14 H15.5 Z" fill="#afb1b3"/></svg>
<div style="left:2319.5px;top:202px;width:32px;height:32px;border-radius:50%;background:#e4e3e8"></div>
<span class="t" style="left:2321.8px;top:197.3px;font-size:16.5px;letter-spacing:0.37px;color:#4d5156;">curl</span>
<svg style="left:2367px;top:201px;" width="36" height="36" viewBox="0 0 36 36"><g fill="#f5946c"><circle cx="25.4" cy="6.5" r="5.3"/><circle cx="7.9" cy="17" r="5.3"/><circle cx="25.4" cy="28.1" r="5.3"/></g><path d="M25.4 6.5 L7.9 17 L25.4 28.1" fill="none" stroke="#f5946c" stroke-width="3"/></svg>
<svg style="left:2414px;top:215.75px;" width="16" height="8.5" viewBox="0 0 16 8.5"><path d="M0 0 H16 L8.0 8.5 Z" fill="#afb1b3"/></svg>
<svg style="left:2457.5px;top:204px;" width="37" height="27" viewBox="0 0 37 27"><path d="M1 3 C1 1.5 2 1 3.5 1 C9 .6 14 1 18.5 3.2 C23 1 28 .6 33.5 1 C35 1 36 1.5 36 3 V20 C36 21.3 35 22 33.5 21.8 C28 21.3 23 21.6 18.5 23.5 C14 21.6 9 21.3 3.5 21.8 C2 22 1 21.3 1 20 Z" fill="#2eb86a"/><path d="M15.5 22 L18.5 26.5 L21.5 22 Z" fill="#2eb86a"/><g stroke="#3c3f41" stroke-width="2"><path d="M5.5 7.2 H15 M5.5 11.7 H15 M5.5 16.2 H15 M22 7.2 H31.5 M22 11.7 H31.5 M22 16.2 H31.5"/></g></svg>
<svg style="left:2514px;top:204px;" width="28" height="28" viewBox="0 0 28 28"><path d="M13 2 C8 2 5.8 6 5.8 11 C5.8 15.5 4 17.5 2 19.8 H24 C22 17.5 20.2 15.5 20.2 11 C20.2 6 18 2 13 2 Z" fill="#afb1b3"/><path d="M9.5 22 A3.6 3.6 0 0 0 16.5 22 Z" fill="#afb1b3"/><circle cx="21" cy="5.2" r="5.2" fill="#3c9edb"/></svg>
<div style="left:2563.5px;top:202px;width:32px;height:32px;border-radius:50%;background:#ee1c54"></div>
<svg style="left:2571px;top:207px;" width="18" height="24" viewBox="0 0 18 24"><g stroke="#f5dce3" stroke-width="2"><path d="M2.8 2.2 V13 M6.1 2.2 V20.5 M9.2 4.7 V19.7 M12.4 4.7 V20.5 M15.4 4.7 V13"/></g></svg>
<svg style="left:2631px;top:203px;" width="30" height="30" viewBox="0 0 30 30"><path d="M25.5 1.2 C21 -.3 16 1.8 15 6.8 C14.6 8.8 15 10.2 15.6 11.4 L1.6 24.6 C.2 26 .4 27.8 1.8 29 C3.2 30.2 5 30 6.2 28.6 L19 14.6 C22.6 16 27.4 14 28.8 10 C29.3 8.5 29.3 7 29 5.6 L24 10.4 L19.8 6.2 Z" fill="#afb1b3" stroke="#afb1b3" stroke-width="1.2" stroke-linejoin="round"/></svg>
<span class="t" style="left:2689.8px;top:200.5px;font-size:29.17px;color:#afb1b3;-webkit-text-stroke:0.7px #afb1b3;">?</span>
<div style="left:1954px;top:252.3px;width:469.6px;height:51.4px;box-sizing:border-box;border:2px solid #5f6162;border-radius:7px;"></div>
<div style="left:1968.4px;top:264.3px;width:27.8px;height:27.8px;border-radius:50%;background:#9177c0;"></div>
<span style="left:1968.4px;top:261.7px;width:27.8px;height:27.8px;line-height:27.8px;text-align:center;font-size:23px;color:#413a52;font-weight:400">p</span>
<span class="t" style="left:2004.0px;top:258.3px;font-size:29.19px;letter-spacing:-0.69px;">card</span>
<svg style="left:2392.5px;top:274.2px;" width="17" height="9" viewBox="0 0 17 9"><path d="M0 0 H17 L8.5 9 Z" fill="#afb1b3"/></svg>
<div style="left:2436px;top:252.3px;width:427.5px;height:51.4px;box-sizing:border-box;border:2px solid #5f6162;border-radius:7px;"></div>
<div style="left:2449.9px;top:264.3px;width:27.8px;height:27.8px;border-radius:50%;background:#3a8cae;"></div>
<span style="left:2449.9px;top:264.6px;width:27.8px;height:27.8px;line-height:27.8px;text-align:center;font-size:17.5px;color:#2b4552;font-weight:400">E</span>
<span class="t" style="left:2485.9px;top:258.5px;font-size:28.44px;letter-spacing:-0.86px;">dev</span>
<svg style="left:2832.5px;top:274.2px;" width="17" height="9" viewBox="0 0 17 9"><path d="M0 0 H17 L8.5 9 Z" fill="#afb1b3"/></svg>
<div style="left:1954px;top:326px;width:197.5px;height:47.7px;box-sizing:border-box;border:2px solid #5f6162;border-radius:7px;"></div>
<div style="left:1956.4px;top:328.2px;width:151.6px;height:43.3px;background:#34b56f;border-radius:5px 0 0 5px;"></div>
<span class="t" style="left:1966.1px;top:331.3px;font-size:25.71px;letter-spacing:-0.87px;color:#c9c0c5;">POST</span>
<svg style="left:2120.2px;top:346.5px;" width="17" height="9" viewBox="0 0 17 9"><path d="M0 0 H17 L8.5 9 Z" fill="#afb1b3"/></svg>
<div style="left:2164px;top:326px;width:532px;height:47.7px;box-sizing:border-box;border:2px solid #626465;background:#45494a;"></div>
<span class="t" style="left:2176.5px;top:330.0px;font-size:29.49px;letter-spacing:-0.50px;">/loginApi/login</span>
<div style="left:2708px;top:326px;width:155.5px;height:47.7px;box-sizing:border-box;border:2px solid #5f6162;border-radius:7px;"></div>
<div style="left:2710.4px;top:328.2px;width:109.6px;height:43.3px;background:#34b56f;border-radius:5px 0 0 5px;"></div>
<span class="t" style="left:2720.5px;top:330.0px;font-size:29.58px;letter-spacing:-0.90px;color:#867f86;">200</span>
<svg style="left:2832.5px;top:346.5px;" width="17" height="9" viewBox="0 0 17 9"><path d="M0 0 H17 L8.5 9 Z" fill="#6e7173"/></svg>
<span class="t" style="left:1971.2px;top:399.2px;font-size:26.07px;letter-spacing:-0.61px;">Headers</span>
<span class="t" style="left:2113.5px;top:399.5px;font-size:25.08px;letter-spacing:-0.55px;">Path Param</span>
<span class="t" style="left:2289.7px;top:399.7px;font-size:24.65px;letter-spacing:-0.59px;">URL Params</span>
<span class="t" style="left:2473.4px;top:399.2px;font-size:26.01px;letter-spacing:-0.73px;">Body</span>
<span class="t" style="left:2579.8px;top:399.3px;font-size:25.7px;letter-spacing:-0.58px;">&gt; Response</span>
<div style="left:1950px;top:452px;width:920px;height:2px;background:#323232;"></div>
<div style="left:2556px;top:448px;width:180px;height:6px;background:#4a88c7;"></div>
<span class="t" style="left:1973.0px;top:463.7px;font-size:25.72px;letter-spacing:-0.68px;">Json</span>
<span class="t" style="left:2073.2px;top:463.3px;font-size:26.9px;letter-spacing:-0.52px;">Pretty</span>
<span class="t" style="left:2189.6px;top:464.2px;font-size:24.33px;letter-spacing:-0.91px;">Raw</span>
<span class="t" style="left:2285.0px;top:463.4px;font-size:26.64px;letter-spacing:-0.52px;">Info</span>
<div style="left:1950px;top:518px;width:920px;height:2px;background:#323232;"></div>
<div style="left:1950px;top:512px;width:100px;height:6px;background:#4a88c7;"></div>
<div style="left:1966px;top:542.3px;width:20px;height:4px;background:#afb1b3;"></div>
<div style="left:1974px;top:534.3px;width:4px;height:20px;background:#afb1b3;"></div>
<div style="left:2006px;top:522.2px;width:44px;height:43.8px;background:#4c5052;border-radius:6px;"></div>
<div style="left:2014.7px;top:530.8px;width:26.6px;height:26.6px;border-radius:50%;background:#ff9000"></div>
<div style="left:2021px;top:542.8px;width:14px;height:2.6px;background:#4a4a3a;"></div>
<div style="left:2026.7px;top:537.1px;width:2.6px;height:14px;background:#4a4a3a;"></div>
<div style="left:1950px;top:568px;width:918px;height:2px;background:#323232;"></div>
<div style="left:1950px;top:570px;width:918px;height:48.5px;background:#45494a;"></div>
<div style="left:2349.8px;top:572px;width:1.5px;height:44px;background:#2f3133;"></div>
<span class="t" style="left:1965.6px;top:573.9px;font-size:23.19px;letter-spacing:-0.76px;">Name</span>
<span class="t" style="left:2367.1px;top:574.1px;font-size:22.53px;letter-spacing:-0.53px;">Value</span>
<div style="left:1950px;top:618.5px;width:918px;height:1.5px;background:#37393b;"></div>
<div style="left:1950px;top:620px;width:918px;height:40px;background:#3a3d3f;"></div>
<svg style="left:1964px;top:632px;" width="20" height="14" viewBox="0 0 20 14"><path d="M2 2 L9.7 10.5 L17.4 2" fill="none" stroke="#afb1b3" stroke-width="2.4"/></svg>
<span class="t" style="left:1999.4px;top:620.8px;font-size:26.07px;letter-spacing:-0.68px;">Root</span>
<div style="left:2350.2px;top:660px;width:517.8px;height:160px;background:#45494a;"></div>
<div style="left:1950px;top:780px;width:400.2px;height:40px;background:#2c60d0;"></div>
<span class="t" style="left:2035.8px;top:659.9px;font-size:27.86px;letter-spacing:-0.79px;">money</span>
<span class="t" style="left:2036.3px;top:699.6px;font-size:29.19px;letter-spacing:-0.53px;">childUserList</span>
<span class="t" style="left:2035.8px;top:740.0px;font-size:28.43px;letter-spacing:-0.70px;">userName</span>
<span class="t" style="left:2037.2px;top:780.0px;font-size:28.84px;letter-spacing:-0.66px;color:#ffffff;">token</span>
<span class="v" style="top:656.0px">null</span>
<span class="v" style="top:696.2px">null</span>
<span class="v" style="top:736.3px">username_agvau</span>
<span class="v" style="top:776.5px">abcdefghijklmnxxxxxxxx</span>
<div style="left:2052px;top:600px;width:408px;height:58px;box-sizing:border-box;background:#4b4e50;border:1px solid #4f5254;box-shadow:0 3px 10px rgba(0,0,0,.3);"></div>
<span class="t" style="left:2073.5px;top:607.6px;font-size:28.95px;letter-spacing:-0.54px;">Add to Project Global Header</span>
<div style="left:2868px;top:570px;width:2px;height:1018px;background:#37393b;"></div>
<svg style="left:2000px;top:230px" width="80" height="310" viewBox="2000 230 80 310"><path d="M2032.7 238 L2045.3 258.6 L2037.3 258.3 L2050.2 528 L2043.8 528.3 L2030.3 258.6 L2021.9 259 Z" fill="#ff2600"/></svg>
<div style="left:2870px;top:139px;width:2px;height:1449px;background:#323232;"></div>
<div style="left:2872px;top:139px;width:30px;height:1449px;background:#3c3f41;"></div>
<div style="left:2872px;top:278px;width:30px;height:211.5px;background:#2b2d2e;"></div>
<span class="t" style="left:2877.1px;top:148.8px;font-size:31px;letter-spacing:-0.37px;color:#afb1b3;font-weight:700;font-style:italic;">m</span>
<span class="t" style="left:0;top:-28.3px;font-size:23.81px;letter-spacing:-0.66px;transform-origin:0 28.3px;transform:translate(2884.4px,191.1px) rotate(90deg);">Maven</span>
<span class="t" style="left:0;top:-28.0px;font-size:23.04px;letter-spacing:-0.48px;transform-origin:0 28.0px;transform:translate(2884.6px,335.6px) rotate(90deg);color:#ffffff;">Fast Request</span>
<svg style="left:2877.5px;top:300.5px;" width="28" height="28.4" viewBox="0 0 28 28.4"><path fill-rule="evenodd" d="M27.3 .5 C25 .3 19 1.5 15.7 3.3 C13 5 11.5 6.3 10 7.6 C8.8 7 7.6 6.7 6.7 6.9 C5.5 7.2 4.5 8 3.8 8.8 L.2 14.3 C0 15 .2 15.4 .7 15.5 L5.7 16.6 C6 17.5 6.3 18.2 6.7 18.8 C7.5 20 8.5 21 9.5 21.6 C10.3 22.2 11.2 22.7 12.1 23 L12.4 27.6 C13 28 14 28.1 14.7 27.8 L19 25 C20.2 24 21 23 21.2 22.1 C21.5 20.5 21.3 19 20.9 17.4 C22.5 16 23.7 14.6 24.7 13.1 C26 11 26.8 9.5 27.1 8.3 C27.7 6 27.8 4 27.6 3.1 C27.6 1.5 27.5 1 27.3 .5 Z M19.3 6.4 a2.9 2.9 0 1 0 .01 0 Z" fill="#b9b9b9"/><path d="M3.6 18.8 L1.2 21.4 L2.4 23.5 L1.7 26.4 L4.3 25.7 L6.7 27.6 L9.3 24.7 C8.2 24.3 7.4 23.8 6.7 23.1 C6 22.4 5.5 21.6 5.2 20.7 Z" fill="#b9b9b9"/></svg>
<span class="t" style="left:0;top:-28.5px;font-size:24.4px;letter-spacing:-0.47px;transform-origin:0 28.5px;transform:translate(60.8px,229.6px) rotate(-90deg);">Project</span>
<span class="t" style="left:0;top:-28.1px;font-size:23.25px;letter-spacing:-0.45px;transform-origin:0 28.1px;transform:translate(60.4px,444.4px) rotate(-90deg);">Pull Requests</span>
<span class="t" style="left:0;top:-28.4px;font-size:24.29px;letter-spacing:-0.46px;transform-origin:0 28.4px;transform:translate(60.8px,1341.0px) rotate(-90deg);">Structure</span>
<span class="t" style="left:0;top:-28.1px;font-size:23.51px;letter-spacing:-0.55px;transform-origin:0 28.1px;transform:translate(60.5px,1529.4px) rotate(-90deg);">Bookmarks</span>
<svg style="left:42px;top:239.5px;" width="23" height="18" viewBox="0 0 23 18"><path d="M0 0 H8.5 L11.5 4.5 H23 V18 H0 Z" fill="#afb1b3"/></svg>
<svg style="left:42px;top:454.5px;" width="23" height="21" viewBox="0 0 23 21"><g fill="none" stroke="#afb1b3" stroke-width="3.2"><path d="M1.6 0 V21"/><path d="M8 8.5 H20 V21"/><path d="M13.5 2 L7 8.5 L13.5 15"/></g></svg>
<svg style="left:44px;top:1354px;" width="18" height="18" viewBox="0 0 18 18"><rect x="0" y="10" width="8" height="8" fill="#afb1b3"/><rect x="10" y="10" width="8" height="8" fill="#afb1b3"/><rect x="10" y="0" width="8" height="8" fill="#afb1b3"/></svg>
<svg style="left:44px;top:1540px;" width="18" height="22" viewBox="0 0 18 22"><path d="M0 0 H18 V22 L9 14.5 L0 22 Z" fill="#afb1b3"/></svg>
<div style="left:36px;top:1588px;width:2866px;height:43px;background:#3c3f41;"></div>
<div style="left:36px;top:1587px;width:2866px;height:2px;background:#323232;"></div>
<div style="left:36px;top:1630px;width:2866px;height:1.5px;background:#37393a;"></div>
<div style="left:36px;top:1631.5px;width:2866px;height:28.5px;background:#3c3f41;"></div>
<svg style="left:93px;top:1598px;" width="19" height="25" viewBox="0 0 19 25"><g fill="none" stroke="#afb1b3" stroke-width="3"><path d="M4 4 V21"/><path d="M4 18 C4 12 14 15 14.5 8"/></g><g fill="#afb1b3"><circle cx="4" cy="4" r="3.6"/><circle cx="4" cy="21" r="3.6"/><circle cx="14.5" cy="7.5" r="3.6"/></g></svg>
<span class="t" style="left:123.9px;top:1590.4px;font-size:22.4px;letter-spacing:-0.53px;">Git</span>
<svg style="left:195.5px;top:1600.5px;" width="21" height="19" viewBox="0 0 21 19"><g fill="#afb1b3"><rect x="0" y="0" width="4" height="4"/><rect x="0" y="7.5" width="4" height="4"/><rect x="0" y="15" width="4" height="4"/><rect x="6.5" y="0" width="14.5" height="4"/><rect x="6.5" y="7.5" width="14.5" height="4"/><rect x="6.5" y="15" width="14.5" height="4"/></g></svg>
<span class="t" style="left:227.3px;top:1590.7px;font-size:21.75px;letter-spacing:-0.79px;">TODO</span>
<svg style="left:330.2px;top:1598.6px;" width="22" height="22" viewBox="0 0 22 22"><circle cx="11" cy="11" r="10.6" fill="#afb1b3"/><rect x="9.3" y="4.5" width="3.4" height="8.5" fill="#3c3f41"/><rect x="9.3" y="14.8" width="3.4" height="3.4" fill="#3c3f41"/></svg>
<span class="t" style="left:360.9px;top:1590.0px;font-size:23.54px;letter-spacing:-0.53px;">Problems</span>
<svg style="left:501px;top:1597px" width="24" height="27" viewBox="501 1597 24 27"><g fill="none" stroke="#afb1b3" stroke-width="2.6"><path d="M508.2 1599.3 L511.6 1603.3 M517.6 1599.3 L514.2 1603.3"/><path d="M503 1607.6 H522.8 M503 1612.9 H522.8 M503 1618.2 H522.8"/></g><path d="M506.1 1609.5 A6.85 6.9 0 0 1 519.8 1609.5 V1615.3 A6.85 6.9 0 0 1 506.1 1615.3 Z" fill="#afb1b3"/></svg>
<span class="t" style="left:533.4px;top:1589.9px;font-size:24.01px;letter-spacing:-0.65px;">Debug</span>
<svg style="left:643.5px;top:1599.5px;" width="23" height="21" viewBox="0 0 23 21"><rect width="23" height="21" fill="#afb1b3"/><path d="M4 5 L10 10 L4 15" fill="none" stroke="#3c3f41" stroke-width="2.4"/><path d="M11 16 H19" stroke="#3c3f41" stroke-width="2.4"/></svg>
<span class="t" style="left:676.8px;top:1590.1px;font-size:23.35px;letter-spacing:-0.47px;">Terminal</span>
<svg style="left:801px;top:1597px;" width="28" height="27" viewBox="0 0 28 27"><g fill="#afb1b3"><path d="M1 9 L10 1 L17 4.5 L18.5 8 L12 13.5 L8 9.5 L4.5 12 Z"/><path d="M11 11 L14.5 8 L28 23 L24 27 Z"/></g></svg>
<span class="t" style="left:835.1px;top:1589.9px;font-size:23.96px;letter-spacing:-0.48px;">Build</span>
<svg style="left:928px;top:1598px;" width="26" height="25" viewBox="0 0 26 25"><g fill="#afb1b3"><path d="M13 0 L26 6.5 L13 13 L0 6.5 Z"/><path d="M3.2 10.5 L0 12.2 L13 18.8 L26 12.2 L22.8 10.5 L13 15.5 Z"/><path d="M3.2 16.2 L0 17.9 L13 24.5 L26 17.9 L22.8 16.2 L13 21.2 Z"/></g></svg>
<span class="t" style="left:960.9px;top:1590.0px;font-size:23.78px;letter-spacing:-0.52px;">Dependencies</span>
<div style="left:2716.3px;top:1598.7px;width:24.6px;height:24.6px;border-radius:50% 50% 0 50%;background:#c94f4f"></div>
<span class="t" style="left:2722.9px;top:1591.9px;font-size:19px;letter-spacing:1.19px;color:#ffffff;font-weight:700;">2</span>
<span class="t" style="left:2750.1px;top:1590.2px;font-size:23.1px;letter-spacing:-0.49px;">Event Log</span>
<div style="left:49px;top:1640.5px;width:19px;height:19px;box-sizing:border-box;border:2.4px solid #afb1b3;"></div>
<div style="left:44px;top:1651px;width:6px;height:9px;background:#afb1b3;"></div>
<span class="t" style="left:95.5px;top:1631.1px;font-size:23.96px;letter-spacing:-0.42px;">All files are up-to-date (moments ago)</span>
<span class="t" style="left:2319.4px;top:1631.3px;font-size:23.43px;letter-spacing:-0.54px;">19:20</span>
<span class="t" style="left:2399.8px;top:1632.2px;font-size:20.64px;">LF</span>
<span class="t" style="left:2447.4px;top:1631.0px;font-size:24.18px;letter-spacing:-0.63px;">UTF-8</span>
<span class="t" style="left:2538.7px;top:1631.2px;font-size:23.6px;letter-spacing:-0.51px;">4 spaces</span>
<svg style="left:2640px;top:1640px;" width="22" height="20" viewBox="0 0 22 20"><path d="M0 8 L8 0 H15 V11 H12 A6 6 0 0 0 6 17 V20 H0 Z" fill="#afb1b3"/><path d="M0 8 L8 0 V8 Z" fill="#3c3f41" opacity=".45"/><circle cx="15" cy="18" r="5" fill="none" stroke="#afb1b3" stroke-width="2.6"/></svg>
<svg style="left:2694px;top:1640px;" width="20" height="20" viewBox="0 0 20 20"><g fill="none" stroke="#afb1b3" stroke-width="3.2"><path d="M4 4 V20"/><path d="M4 17.5 C4 12 16 14.5 16 6"/></g><g fill="#afb1b3"><circle cx="4" cy="4" r="3.7"/><circle cx="16" cy="4.8" r="3.7"/></g></svg>
<span class="t" style="left:2724.1px;top:1631.3px;font-size:23.36px;letter-spacing:-0.54px;">master</span>
<svg style="left:2814px;top:1641px;" width="22" height="19" viewBox="0 0 22 19"><path d="M2 10 V6 A4.5 4.5 0 0 1 11 6 V9" fill="none" stroke="#afb1b3" stroke-width="2.6"/><rect x="7" y="9" width="14" height="10" fill="#afb1b3"/></svg>
<div style="left:2863.7px;top:1639.6px;width:24px;height:24px;border-radius:50%;background:#d64d4b"></div>
<div style="left:2873.4px;top:1644px;width:4.6px;height:11px;background:#3c2222;"></div>
<div style="left:2873.4px;top:1657.5px;width:4.6px;height:3.5px;background:#3c2222;"></div>
</div>
</body></html>
